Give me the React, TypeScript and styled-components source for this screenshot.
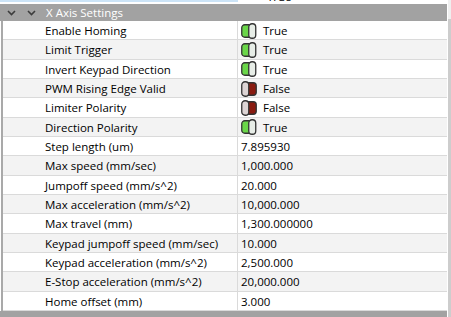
import React from "react";
import styled, { createGlobalStyle } from "styled-components";

const Global = createGlobalStyle`
  html, body { margin: 0; padding: 0; background: #ffffff; }
  body { font-family: "Open Sans", "Noto Sans", sans-serif; }
`;

const Frame = styled.div`
  width: 451px;
  height: 317px;
  display: flex;
  overflow: hidden;
  background: #ffffff;
`;

const Grid = styled.div`
  width: 447px;
  height: 317px;
  overflow: hidden;
  display: flex;
  flex-direction: column;
`;

const Scrollbar = styled.div`
  margin-left: 1px;
  width: 3px;
  display: flex;
  flex-direction: column;
  background: #efefef;
`;

const Thumb = styled.div`
  margin-top: 19px;
  flex: 1;
  background: #cdcdcd;
`;

const PrevRow = styled.div`
  height: 4px;
  flex: none;
  display: flex;
  overflow: hidden;
`;

const PrevLabel = styled.div`
  width: 238px;
  height: 2px;
  flex: none;
  background: #cce4f7;
`;

const PrevValue = styled.div`
  height: 2px;
  overflow: hidden;
  display: flex;
  align-items: flex-end;
  padding-left: 29px;
  font-size: 11.5px;
  line-height: 11px;
  color: #000;
`;

const Header = styled.div<{ $partial?: boolean }>`
  flex: none;
  height: ${(p) => (p.$partial ? "6px" : "17px")};
  background: #a2a2a2;
  display: flex;
  align-items: center;
  color: #ffffff;
  font-size: 11.5px;
`;

const Chevron = styled.svg<{ $gap: number }>`
  margin-left: ${(p) => p.$gap}px;
  flex: none;
`;

const HeaderTitle = styled.span`
  margin-left: 10px;
`;

const Body = styled.div`
  flex: none;
  border-left: 2px solid #a9a9a9;
  margin-left: 1px;
  display: flex;
  flex-direction: column;
`;

const Row = styled.div<{ $alt: boolean }>`
  height: 19.33px;
  box-sizing: border-box;
  display: flex;
  background: ${(p) => (p.$alt ? "#f3f3f3" : "#ffffff")};
  border-bottom: 1px solid #dadada;
  font-size: 11.5px;
  color: #000000;
`;

const Label = styled.div`
  width: 235px;
  flex: none;
  box-sizing: border-box;
  padding-left: 42px;
  padding-top: 1px;
  display: flex;
  align-items: center;
  border-right: 1px solid #dadada;
  white-space: nowrap;
  overflow: hidden;
`;

const Value = styled.div`
  flex: 1;
  display: flex;
  align-items: center;
  padding-left: 3px;
  padding-top: 1px;
  white-space: nowrap;
`;

const BoolText = styled.span`
  margin-left: 6px;
`;

function Toggle({ on }: { on: boolean }) {
  return on ? (
    <svg width="16" height="16" viewBox="0 0 16 16">
      <rect x="0.75" y="1.75" width="11" height="12.5" rx="3" fill="#6ad649" stroke="#333" strokeWidth="1.3" />
      <rect x="7.75" y="0.75" width="7" height="14.5" rx="3.3" fill="#e7ede7" stroke="#333" strokeWidth="1.3" />
    </svg>
  ) : (
    <svg width="16" height="16" viewBox="0 0 16 16">
      <rect x="4.25" y="1.75" width="11" height="12.5" rx="3" fill="#891b10" stroke="#333" strokeWidth="1.3" />
      <rect x="0.75" y="0.75" width="7" height="14.5" rx="3.3" fill="#dcd4d4" stroke="#333" strokeWidth="1.3" />
    </svg>
  );
}

type Item = { label: string; value: string | boolean };

const items: Item[] = [
  { label: "Enable Homing", value: true },
  { label: "Limit Trigger", value: true },
  { label: "Invert Keypad Direction", value: true },
  { label: "PWM Rising Edge Valid", value: false },
  { label: "Limiter Polarity", value: false },
  { label: "Direction Polarity", value: true },
  { label: "Step length (um)", value: "7.895930" },
  { label: "Max speed (mm/sec)", value: "1,000.000" },
  { label: "Jumpoff speed (mm/s^2)", value: "20.000" },
  { label: "Max acceleration (mm/s^2)", value: "10,000.000" },
  { label: "Max travel (mm)", value: "1,300.000000" },
  { label: "Keypad jumpoff speed (mm/sec)", value: "10.000" },
  { label: "Keypad acceleration (mm/s^2)", value: "2,500.000" },
  { label: "E-Stop acceleration (mm/s^2)", value: "20,000.000" },
  { label: "Home offset (mm)", value: "3.000" },
];

function ChevronDown({ gap }: { gap: number }) {
  return (
    <Chevron $gap={gap} width="9" height="6" viewBox="0 0 9 6">
      <path d="M1 1 L4.5 4.5 L8 1" fill="none" stroke="#3c3c3c" strokeWidth="1.6" />
    </Chevron>
  );
}

export default function App() {
  return (
    <>
      <Global />
      <Frame>
        <Grid>
          <PrevRow>
            <PrevLabel />
            <PrevValue>True</PrevValue>
          </PrevRow>
          <Header>
            <ChevronDown gap={7} />
            <ChevronDown gap={11} />
            <HeaderTitle>X Axis Settings</HeaderTitle>
          </Header>
          <Body>
            {items.map((it, i) => (
              <Row key={it.label} $alt={i % 2 === 1}>
                <Label>{it.label}</Label>
                <Value>
                  {typeof it.value === "boolean" ? (
                    <>
                      <Toggle on={it.value} />
                      <BoolText>{it.value ? "True" : "False"}</BoolText>
                    </>
                  ) : (
                    it.value
                  )}
                </Value>
              </Row>
            ))}
          </Body>
          <Header $partial />
        </Grid>
        <Scrollbar>
          <Thumb />
        </Scrollbar>
      </Frame>
    </>
  );
}
